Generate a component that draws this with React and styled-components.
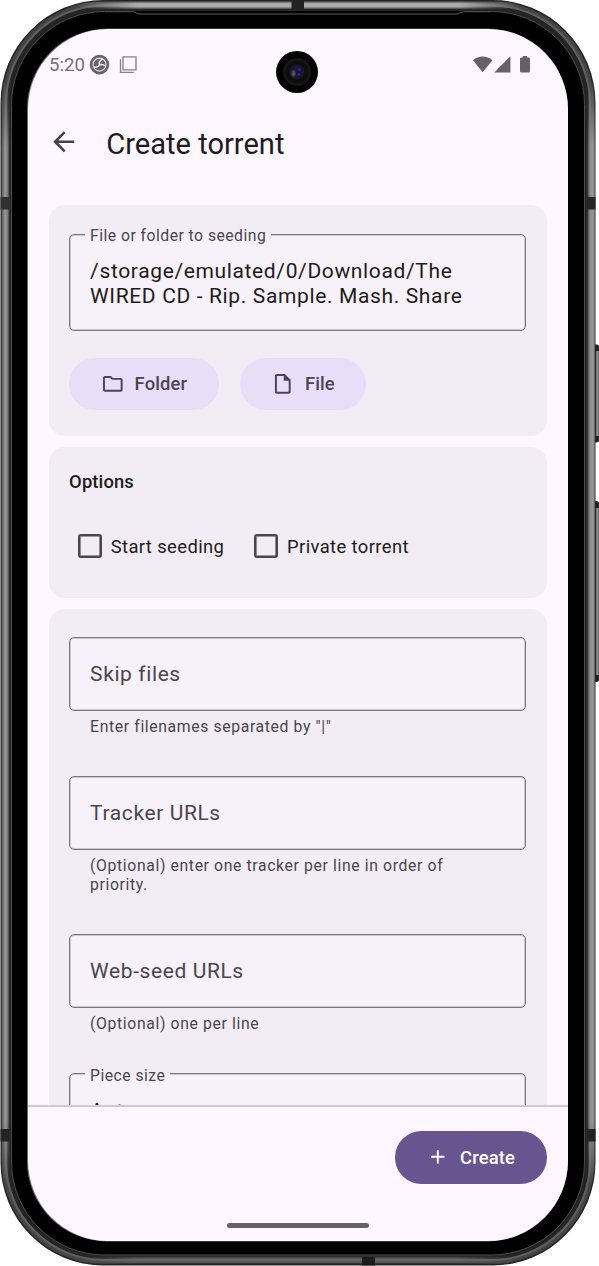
import React from "react";
import styled, { createGlobalStyle } from "styled-components";

const GlobalStyle = createGlobalStyle`
  *, *::before, *::after { box-sizing: border-box; }
  html, body { margin: 0; padding: 0; background: #fff; }
  body { font-family: Roboto, "Liberation Sans", sans-serif; color: #1d1b20; overflow: hidden; }
`;

const Phone = styled.div`
  position: relative;
  width: 599px;
  height: 1266px;
  padding: 29px 31.5px 25px 27.5px;
  overflow: hidden;
`;

const CasingArt = styled.svg`
  position: absolute;
  inset: 0;
  width: 599px;
  height: 1266px;
`;

const Screen = styled.main`
  position: relative;
  display: flex;
  flex-direction: column;
  height: 1212px;
  border-radius: 80px;
  background: #fef7ff;
  overflow: hidden;
`;

const StatusBar = styled.div`
  flex: none;
  display: flex;
  align-items: center;
  height: 71px;
  padding: 0 36.5px 0 21.5px;
  color: #757077;
`;

const Clock = styled.span`
  font-size: 18.6px;
  line-height: 22px;
  margin-right: 4px;
`;

const Spacer = styled.div`
  flex: 1;
`;

const Camera = styled.svg`
  position: absolute;
  left: 248.5px;
  top: 22px;
  width: 42px;
  height: 42px;
`;

const AppBar = styled.header`
  flex: none;
  display: flex;
  align-items: center;
  gap: 26.5px;
  height: 86px;
  padding: 0 21px;
`;

const BackButton = styled.button`
  display: flex;
  padding: 0;
  border: 0;
  margin: -2px 0 0 -0.3px;
  color: #43444b;
  background: none;
`;

const Title = styled.h1`
  margin: 2px 0 0;
  font-size: 29.1px;
  line-height: 36px;
  font-weight: 400;
`;

const Content = styled.div`
  flex: 1;
  min-height: 0;
  display: flex;
  flex-direction: column;
  gap: 11px;
  padding: 19px 21px 0;
  overflow: hidden;
`;

const Card = styled.section`
  flex: none;
  height: ${(p) => p.$height}px;
  padding: ${(p) => p.$top}px 20.6px 0;
  border-radius: 16px;
  background: #f2ecf4;
`;

const Outline = styled.fieldset`
  min-width: 0;
  height: ${(p) => p.$height}px;
  margin: 0;
  padding: 0 20px;
  border: 1px solid #7d7882;
  border-radius: 5px;
  background: #f7f1f9;
  box-shadow: inset 0 0 0 1px rgba(121, 116, 126, 0.35);
`;

const Legend = styled.legend`
  height: 18px;
  margin-left: -5px;
  padding: 0 5px;
  font-size: 15.75px;
  line-height: 21px;
  letter-spacing: 0.46px;
  color: #49454f;
  background: linear-gradient(#f2ecf4 50%, #f7f1f9 50%);
`;

const Value = styled.div`
  padding-top: ${(p) => p.$top}px;
  font-size: 21px;
  line-height: 24.6px;
  letter-spacing: 0.64px;
`;

const Placeholder = styled.div`
  font-size: 21px;
  line-height: 73px;
  letter-spacing: 0.6px;
  color: #49454f;
`;

const Helper = styled.p`
  height: ${(p) => p.$height}px;
  margin: 0;
  padding: 6.5px 60px 0 21px;
  font-size: 15.75px;
  line-height: 19px;
  letter-spacing: 0.63px;
  color: #49454f;
`;

const ButtonRow = styled.div`
  display: flex;
  gap: 21px;
  margin-top: 26.5px;
`;

const PillButton = styled.button`
  display: flex;
  align-items: center;
  justify-content: center;
  gap: 10.5px;
  width: ${(p) => p.$width}px;
  height: 52.5px;
  padding: 0;
  border: 0;
  border-radius: 27px;
  font: 500 18.4px/26px Roboto, "Liberation Sans", sans-serif;
  letter-spacing: 0.13px;
  color: ${(p) => (p.$primary ? "#fff" : "#4a4458")};
  background: ${(p) => (p.$primary ? "#68548e" : "#e8def8")};
`;

const PillLabel = styled.span`
  padding-top: 1px;
`;

const SectionTitle = styled.h2`
  margin: 0;
  font-size: 18.4px;
  line-height: 26px;
  font-weight: 500;
  letter-spacing: 0.13px;
`;

const CheckRow = styled.div`
  display: flex;
  gap: 30px;
  margin: 38px 0 0 8.8px;
`;

const CheckOption = styled.label`
  display: flex;
  align-items: center;
  gap: 8.8px;
  font-size: 18.4px;
  line-height: 26px;
  letter-spacing: 0.39px;
`;

const CheckText = styled.span`
  padding-top: 1px;
`;

const CheckBox = styled.span`
  width: 24px;
  height: 24px;
  border: 2.6px solid #49454f;
  border-radius: 3px;
  box-shadow: inset 0 0 0 0.6px #49454f;
`;

const BottomBar = styled.footer`
  flex: none;
  display: flex;
  flex-direction: column;
  align-items: flex-end;
  justify-content: space-between;
  height: 136px;
  padding: 24px 21px 13px;
  border-top: 2px solid #cfc9d3;
`;

const HomeHandle = styled.div`
  align-self: center;
  width: 142px;
  height: 5px;
  border-radius: 3px;
  background: #656266;
`;

const Glyph = styled.svg`
  flex: none;
  width: ${(p) => p.$size}px;
  height: ${(p) => p.$size}px;
  fill: currentColor;
`;

function Icon({ d, size = 23.6 }) {
  return (
    <Glyph $size={size} viewBox="0 0 24 24">
      <path d={d} />
    </Glyph>
  );
}

const FOLDER =
  "M9.17 6l2 2H20v10H4V6h5.17M10 4H4c-1.1 0-1.99.9-1.99 2L2 18c0 1.1.9 2 2 2h16c1.1 0 2-.9 2-2V8c0-1.1-.9-2-2-2h-8l-2-2z";
const FILE =
  "M14 2H6c-1.1 0-2 .9-2 2v16c0 1.1.9 2 2 2h12c1.1 0 2-.9 2-2V8l-6-6zM6 20V4h7v5h5v11H6z";
const PLUS =
  "M18 13h-5v5c0 .55-.45 1-1 1s-1-.45-1-1v-5H6c-.55 0-1-.45-1-1s.45-1 1-1h5V6c0-.55.45-1 1-1s1 .45 1 1v5h5c.55 0 1 .45 1 1s-.45 1-1 1z";
const BACK = "M20 11H7.83l5.59-5.59L12 4l-8 8 8 8 1.41-1.41L7.83 13H20v-2z";

function Casing() {
  return (
    <CasingArt viewBox="0 0 599 1266">
      <defs>
        <linearGradient id="metalLeft">
          <stop offset="0" stopColor="#555" />
          <stop offset=".25" stopColor="#777" />
          <stop offset=".45" stopColor="#9a9a9a" />
          <stop offset=".75" stopColor="#7a7a7a" />
          <stop offset="1" stopColor="#333" />
        </linearGradient>
        <linearGradient id="metalRight">
          <stop offset="0" stopColor="#4a4a4a" />
          <stop offset=".35" stopColor="#8c8c8c" />
          <stop offset=".75" stopColor="#999" />
          <stop offset="1" stopColor="#5a5a5a" />
        </linearGradient>
        <linearGradient id="metalTop" x1="0" y1="0" x2="0" y2="1">
          <stop offset="0" stopColor="#555" />
          <stop offset=".3" stopColor="#b0b0b0" />
          <stop offset=".7" stopColor="#a8a8a8" />
          <stop offset="1" stopColor="#444" />
        </linearGradient>
        <linearGradient id="metalBottom" x1="0" y1="0" x2="0" y2="1">
          <stop offset="0" stopColor="#333" />
          <stop offset=".4" stopColor="#666" />
          <stop offset=".8" stopColor="#555" />
          <stop offset="1" stopColor="#222" />
        </linearGradient>
        <linearGradient id="fadeX">
          <stop offset="0" stopColor="#000" />
          <stop offset=".14" stopColor="#fff" />
          <stop offset=".86" stopColor="#fff" />
          <stop offset="1" stopColor="#000" />
        </linearGradient>
        <linearGradient id="fadeY" x1="0" y1="0" x2="0" y2="1">
          <stop offset="0" stopColor="#000" />
          <stop offset=".06" stopColor="#fff" />
          <stop offset=".94" stopColor="#fff" />
          <stop offset="1" stopColor="#000" />
        </linearGradient>
        <linearGradient id="key" gradientUnits="userSpaceOnUse" x1="595.5" y1="0" x2="599" y2="0">
          <stop offset="0" stopColor="#444" />
          <stop offset=".5" stopColor="#999" />
          <stop offset="1" stopColor="#666" />
        </linearGradient>
        <mask id="maskX"><rect x="75" y="0" width="446" height="1266" fill="url(#fadeX)" /></mask>
        <mask id="maskY"><rect x="0" y="80" width="599" height="1106" fill="url(#fadeY)" /></mask>
      </defs>
      <rect x="592" y="344.5" width="7" height="98" rx="2.5" fill="#222" />
      <rect x="595.5" y="351" width="3.5" height="85" fill="url(#key)" />
      <rect x="592" y="501" width="7" height="181" rx="2.5" fill="#222" />
      <rect x="595.5" y="508" width="3.5" height="167" fill="url(#key)" />
      <rect x="0.5" y="0" width="595" height="1265.5" rx="103" fill="#242424" />
      <rect x="4.5" y="4" width="587" height="1257.5" rx="99" fill="none" stroke="#444" strokeWidth="5" />
      <rect x="6" y="5.5" width="584" height="1254.5" rx="98" fill="none" stroke="#606060" strokeWidth="2" />
      <rect x="75" y="1.5" width="446" height="7.5" fill="url(#metalTop)" mask="url(#maskX)" />
      <rect x="75" y="1256.5" width="446" height="7.5" fill="url(#metalBottom)" mask="url(#maskX)" />
      <rect x="1.5" y="80" width="8" height="1106" fill="url(#metalLeft)" mask="url(#maskY)" />
      <rect x="587.5" y="80" width="7.5" height="1106" fill="url(#metalRight)" mask="url(#maskY)" />
      <rect x="11.5" y="11.5" width="573" height="1243.5" rx="93" fill="#000" stroke="#4a4a4a" strokeWidth="1" />
      <path d="M105 11H491V13L462 14.2H138L133 12.2H105Z" fill="#000" />
      <path d="M105 11.7H132C136 11.7 136 14 140 14H456C460 14 460 11.7 465 11.7H491" fill="none" stroke="#666" strokeWidth=".9" />
      <rect x="291.5" y="0" width="12.5" height="10.5" fill="#222" />
      <rect x="362" y="1257" width="13" height="8.5" fill="#1c1c1c" />
      <rect x="0.5" y="197" width="9.5" height="12.5" fill="#303030" />
      <rect x="586.5" y="197" width="9" height="12.5" fill="#262626" />
      <rect x="0.5" y="1129" width="9.5" height="12.5" fill="#242424" />
      <rect x="586.5" y="1129" width="9" height="12.5" fill="#222" />
      <rect x="27" y="28.6" width="540.8" height="1212.8" rx="80" fill="#6c696d" />
    </CasingArt>
  );
}

function FrontCamera() {
  return (
    <Camera viewBox="0 0 42 42">
      <defs>
        <radialGradient id="lens" cx=".58" cy=".42" r=".6">
          <stop offset="0" stopColor="#24106a" />
          <stop offset=".5" stopColor="#191530" />
          <stop offset="1" stopColor="#181a1c" />
        </radialGradient>
        <radialGradient id="glint" cx=".5" cy=".5" r=".5">
          <stop offset="0" stopColor="#5f6d78" />
          <stop offset="1" stopColor="#5f6d78" stopOpacity="0" />
        </radialGradient>
      </defs>
      <circle cx="21" cy="21" r="21" fill="#000" />
      <circle cx="21" cy="21" r="12.5" fill="#0c0c0c" stroke="#151515" strokeWidth="3" />
      <circle cx="21" cy="21" r="7.5" fill="url(#lens)" />
      <ellipse cx="17.5" cy="22.5" rx="3" ry="4.5" fill="url(#glint)" />
      <circle cx="23.5" cy="18.7" r="1.4" fill="#3a1c90" />
      <circle cx="22.8" cy="23.5" r="1" fill="#51318d" />
    </Camera>
  );
}

function NotificationIcons() {
  return (
    <svg width="50" height="22" viewBox="0 0 50 22">
      <circle cx="10.5" cy="10.6" r="9.8" fill="#67636a" />
      <circle cx="10.5" cy="10.6" r="6.5" fill="none" stroke="#e3dde4" strokeWidth="1.1" />
      <path
        d="M10.6 10.8C9.7 8.8 11 6.6 13.6 5.2M10.6 10.8C12.6 10.2 15 10.8 16.6 12.2M10.6 10.8C9.6 12.8 7.4 13.5 4.8 12.9"
        fill="none"
        stroke="#f4eef5"
        strokeWidth="1.5"
      />
      <path d="M34 2.9H47V15.9H34Z M31.5 5.2V18.3H44.8" fill="none" stroke="#858087" strokeWidth="1.35" />
    </svg>
  );
}

function SystemIcons() {
  return (
    <svg width="58" height="20" viewBox="0 0 58 20" fill="#656166">
      <path d="M0 5.3C5.6 .3 13.8 .3 19.4 5.3L9.7 17.2Z" />
      <path d="M21.3 17.4L37.4 1.2V17.4Z" />
      <path d="M49.8 1H54V2.5H55.7Q57 2.5 57 3.8V16.3Q57 17.6 55.7 17.6H48.3Q47 17.6 47 16.3V3.8Q47 2.5 48.3 2.5H49.8Z" />
    </svg>
  );
}

function TextField({ label, value, placeholder, height = 73.5, valueTop = 16 }) {
  return (
    <Outline $height={height}>
      {label && <Legend>{label}</Legend>}
      {placeholder && <Placeholder>{placeholder}</Placeholder>}
      {value && <Value $top={valueTop}>{value}</Value>}
    </Outline>
  );
}

export default function App() {
  return (
    <Phone>
      <GlobalStyle />
      <Casing />
      <Screen>
        <StatusBar>
          <Clock>5:20</Clock>
          <NotificationIcons />
          <Spacer />
          <SystemIcons />
        </StatusBar>
        <FrontCamera />
        <AppBar>
          <BackButton>
            <Icon d={BACK} size={31.5} />
          </BackButton>
          <Title>Create torrent</Title>
        </AppBar>
        <Content>
          <Card $height={231} $top={20}>
            <TextField
              label="File or folder to seeding"
              height={106}
              value={
                <>
                  /storage/emulated/0/Download/The
                  <br />
                  WIRED CD - Rip. Sample. Mash. Share
                </>
              }
            />
            <ButtonRow>
              <PillButton $width={149.5}>
                <Icon d={FOLDER} />
                <PillLabel>Folder</PillLabel>
              </PillButton>
              <PillButton $width={126.5}>
                <Icon d={FILE} />
                <PillLabel>File</PillLabel>
              </PillButton>
            </ButtonRow>
          </Card>
          <Card $height={151} $top={21.5}>
            <SectionTitle>Options</SectionTitle>
            <CheckRow>
              <CheckOption>
                <CheckBox />
                <CheckText>Start seeding</CheckText>
              </CheckOption>
              <CheckOption>
                <CheckBox />
                <CheckText>Private torrent</CheckText>
              </CheckOption>
            </CheckRow>
          </Card>
          <Card $height={560} $top={28}>
            <TextField placeholder="Skip files" />
            <Helper $height={65.5}>Enter filenames separated by "|"</Helper>
            <TextField placeholder="Tracker URLs" />
            <Helper $height={84.5}>(Optional) enter one tracker per line in order of priority.</Helper>
            <TextField placeholder="Web-seed URLs" />
            <Helper $height={57}>(Optional) one per line</Helper>
            <TextField label="Piece size" height={83} value="Auto" />
          </Card>
        </Content>
        <BottomBar>
          <PillButton $primary $width={152}>
            <Icon d={PLUS} />
            <PillLabel>Create</PillLabel>
          </PillButton>
          <HomeHandle />
        </BottomBar>
      </Screen>
    </Phone>
  );
}
